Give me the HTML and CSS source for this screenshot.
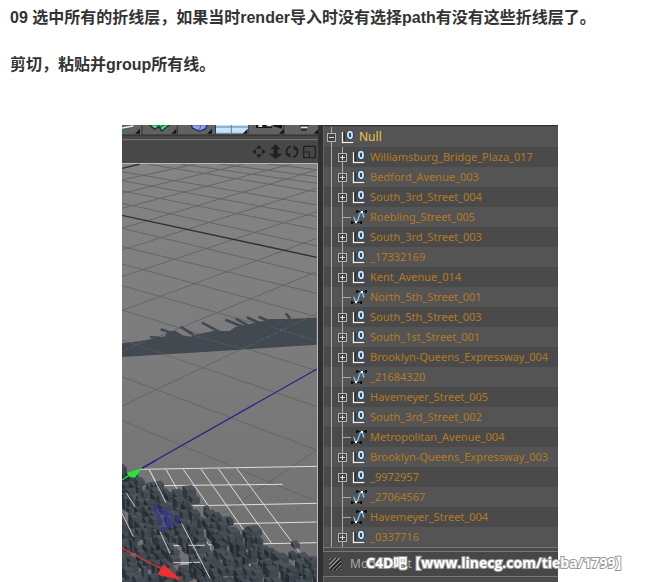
FILE: index.html
```
<!DOCTYPE html>
<html lang="zh-CN">
<head>
<meta charset="utf-8">
<title>C4D</title>
<link rel="stylesheet" href="styles.css">
</head>
<body>
<svg class="defs" aria-hidden="true">
  <symbol id="null" viewBox="0 0 16 16">
    <path d="M3.500 3v11M3 13.500h11" stroke="#2c2c2c" stroke-width="3" fill="none"/>
    <path d="M2.500 3v10.500h11" stroke="#f2f2f2" stroke-width="1.300" fill="none"/>
    <ellipse cx="10" cy="6" rx="2.200" ry="3.200" stroke="#26394c" stroke-width="3.400" fill="none"/>
    <ellipse cx="10" cy="6" rx="2.100" ry="3.300" stroke="#c2e2fc" stroke-width="1.900" fill="none"/>
  </symbol>
  <symbol id="spline" viewBox="0 0 16 16">
    <path d="M6 2.500h9M1 13.500h8" stroke="#111" stroke-width="1"/>
    <path d="M5 1h2v3H5zM14 1h2v3h-2zM0 12h2v3H0zM9 12h2v3H9z" fill="#111"/>
    <path d="M2.500 8c1 0 1.500 5 2.500 5 2.500 0 3-10 5.500-10 1.500 0 1.500 4 2.500 5.500" stroke="#7bbdf0" stroke-width="1.500" fill="none"/>
    <path d="M4 12h2v2H4zM10 2h2v2h-2z" fill="#fff"/>
  </symbol>
</svg>
<main class="article">
  <p>09 选中所有的折线层，如果当时render导入时没有选择path有没有这些折线层了。</p>
  <p>剪切，粘贴并group所有线。</p>
  <figure class="shot">
    <svg class="scene" viewBox="0 0 196 457" role="img" aria-label="3D">
      <defs>
        <linearGradient id="floor" x1="0" y1="0" x2="0" y2="1"><stop offset="0" stop-color="#858585"/><stop offset="1" stop-color="#707070"/></linearGradient>
      </defs>
      <rect width="196" height="457" fill="#484848"/>
      <rect width="196" height="10" fill="#626262"/>
      <g transform="translate(-2 -5) scale(.3333)">
        <path d="M66 15v27M172 15v27M287 15v27M384 15v27M492 15v27" stroke="#333" stroke-width="3"/>
        <path d="M6 24l34-6" stroke="#eee" stroke-width="5"/><path d="M6 30l34-7" stroke="#1d8245" stroke-width="3"/>
        <path d="M88 14l16 14 12-8 10 13 14-12 10-7z" fill="#51d889" stroke="#143d25" stroke-width="4"/><path d="M110 14l12 7 12-7M122 21v12" stroke="#174a2b" stroke-width="3" fill="none"/>
        <path d="M214 14l3 10 22 10 18-8 4-12z" fill="#8fa1ed" stroke="#26305a" stroke-width="4"/><path d="M238 32l5-18" stroke="#4c5b9c" stroke-width="3"/>
        <path d="M288 14h96v28h-96z" fill="#c4e3fc"/><path d="M288 21h96M334 14v28M288 40h96" stroke="#617d95" stroke-width="3"/>
        <path d="M408 14h48v10h-48zM460 14h26v12l-26-7z" fill="#161616"/><path d="M415 14h12v7h-12z" fill="#c4e3fc"/><path d="M440 15h15v4h-15z" fill="#ddd"/>
        <path d="M541 16h25M543 30h18" stroke="#222" stroke-width="5"/><path d="M543 22h20" stroke="#ddd" stroke-width="4"/>
        <path d="M60 26v15H45zM169 26v15h-15zM276 26v15h-15zM383 26v15h-15zM492 26v15h-15zM596 26v15h-15z" fill="#161616"/>
        <path d="M6 45h588" stroke="#2b2b2b" stroke-width="3"/><path d="M6 59h588" stroke="#7a7a7a" stroke-width="3"/>
        <g fill="#202020"><path d="M417 74l8 12h-16zM417 115l8-12h-16zM396 95l12-8v16zM438 95l-12-8v16zM467 72l15 16h-9v13h14l-20 16-20-16h14V88h-9z"/></g>
        <path d="M513 79a16 16 0 0 0-8 28M519 111a16 16 0 0 0 8-28" stroke="#202020" stroke-width="5" fill="none"/><path d="M497 102l15-2-1 14zM535 88l-15 2 1-14z" fill="#202020"/>
        <rect x="551" y="79" width="35" height="34" rx="3" fill="none" stroke="#202020" stroke-width="4"/><path d="M551 96h17v17" fill="none" stroke="#202020" stroke-width="3"/>
      </g>
      <rect y="38" width="196" height="419" fill="url(#floor)"/>
      <g transform="translate(-2 -5) scale(.3333)" stroke="#656565" stroke-width="3" fill="none">
        <path d="M440 132l150 17M300 132l290 38M180 132l410 58M80 132l510 84M6 155l584 100M6 182l584 108M6 213l584 115M6 250l584 128M6 325l584 140M6 380l584 140M6 432l584 158M6 497l584 166M6 570l584 182M6 660l584 200M6 770l584 220M6 902l584 243"/>
        <path d="M6 180l220-48M6 220l364-88M6 265l509-133M6 325l584-175M6 390l584-185M6 470l584-195M6 572l584-217M6 695l584-240M6 858l584-278M310 1180l280-190"/>
        <path d="M6 286l584 126M6 145l54-13" stroke="#303030" stroke-width="4"/>
      </g>
      <g transform="translate(-2 115) scale(.3333)">
        <path d="M6 310l50-6 40-7 40-8 5-14 26-3 20 14 25 4 14-6 54-11h48l20-13 28-4 43-11 32-8h40l99-4v81l-290 19-294 18z" fill="#434950"/>
        <path d="M182 260l40 26M246 248l60 32M316 239l70 28M347 236l45 25M380 232l50 22M416 230l36 16M497 220l14 16M122 268l42 14M90 291l40 4" stroke="#434950" stroke-width="8"/>
        <path d="M6 335l180-83M300 360l290-140M6 300l170 57M215 285l165 45M450 260l140 42" stroke="#7b8085" stroke-width="2" stroke-dasharray="3 5"/>
      </g>
      <path d="M20 343L195 244" stroke="#22228a" stroke-width="1.200"/>
      <g transform="translate(-2 335) scale(.3333)">
        <path d="M60 28l530-9M6 78l482-5M180 138l410-8M300 192l290-6M150 257l440-9M130 312h130M88 30l185 330M138 28l135 240M190 28l200 290M243 27l210 300M296 27l159 223M350 25l195 260M6 100l140 260" stroke="#dedede" stroke-width="3" fill="none"/>
        <g id="city"></g>
        <path d="M88 30l50 98M120 215l30 65M185 190l85 165M6 160l34 70M160 308l80-1M205 256h50M20 100l25 40" stroke="#d0d0d0" stroke-width="3" fill="none"/>
        <path d="M215 306l42 36" stroke="#151515" stroke-width="3"/>
        <path d="M97 136l83 42-55 35M133 155l22 40 25-17z" stroke="#3434a8" stroke-width="4" fill="#30348c" fill-opacity=".5"/>
        <path d="M66 25L110 0" stroke="#22228a" stroke-width="4"/>
        <path d="M6 60L30 44" stroke="#2ae43a" stroke-width="4"/><path d="M20 38l46-13-22 28-14-2z" fill="#2ae43a"/>
        <path d="M6 265l125 65" stroke="#e23434" stroke-width="4"/><path d="M130 313l-18 31 73 17z" fill="#ea3030"/>
      </g>
      <path d="M0 38.500h195.500V457" stroke="#b9b9b9" fill="none"/>
    </svg>
    <section class="objects">
      <ul class="tree">
        <li class="row root"><button class="toggle open" aria-label="Null"></button><svg class="icon"><use href="#null"/></svg><span>Null</span></li>
        <li class="row"><button class="toggle" aria-label="+"></button><svg class="icon"><use href="#null"/></svg><span>Williamsburg_Bridge_Plaza_017</span></li>
        <li class="row"><button class="toggle" aria-label="+"></button><svg class="icon"><use href="#null"/></svg><span>Bedford_Avenue_003</span></li>
        <li class="row"><button class="toggle" aria-label="+"></button><svg class="icon"><use href="#null"/></svg><span>South_3rd_Street_004</span></li>
        <li class="row"><i class="leaf"></i><svg class="icon"><use href="#spline"/></svg><span>Roebling_Street_005</span></li>
        <li class="row"><button class="toggle" aria-label="+"></button><svg class="icon"><use href="#null"/></svg><span>South_3rd_Street_003</span></li>
        <li class="row"><button class="toggle" aria-label="+"></button><svg class="icon"><use href="#null"/></svg><span>_17332169</span></li>
        <li class="row"><button class="toggle" aria-label="+"></button><svg class="icon"><use href="#null"/></svg><span>Kent_Avenue_014</span></li>
        <li class="row"><i class="leaf"></i><svg class="icon"><use href="#spline"/></svg><span>North_5th_Street_001</span></li>
        <li class="row"><button class="toggle" aria-label="+"></button><svg class="icon"><use href="#null"/></svg><span>South_5th_Street_003</span></li>
        <li class="row"><button class="toggle" aria-label="+"></button><svg class="icon"><use href="#null"/></svg><span>South_1st_Street_001</span></li>
        <li class="row"><button class="toggle" aria-label="+"></button><svg class="icon"><use href="#null"/></svg><span>Brooklyn-Queens_Expressway_004</span></li>
        <li class="row"><i class="leaf"></i><svg class="icon"><use href="#spline"/></svg><span>_21684320</span></li>
        <li class="row"><button class="toggle" aria-label="+"></button><svg class="icon"><use href="#null"/></svg><span>Havemeyer_Street_005</span></li>
        <li class="row"><button class="toggle" aria-label="+"></button><svg class="icon"><use href="#null"/></svg><span>South_3rd_Street_002</span></li>
        <li class="row"><i class="leaf"></i><svg class="icon"><use href="#spline"/></svg><span>Metropolitan_Avenue_004</span></li>
        <li class="row"><button class="toggle" aria-label="+"></button><svg class="icon"><use href="#null"/></svg><span>Brooklyn-Queens_Expressway_003</span></li>
        <li class="row"><button class="toggle" aria-label="+"></button><svg class="icon"><use href="#null"/></svg><span>_9972957</span></li>
        <li class="row"><i class="leaf"></i><svg class="icon"><use href="#spline"/></svg><span>_27064567</span></li>
        <li class="row"><i class="leaf"></i><svg class="icon"><use href="#spline"/></svg><span>Havemeyer_Street_004</span></li>
        <li class="row"><button class="toggle" aria-label="+"></button><svg class="icon"><use href="#null"/></svg><span>_0337716</span></li>
      </ul>
      <div class="menubar"><i class="grip"></i><button>Mode</button><button>Edit</button></div>
    </section>
    <figcaption class="watermark">C4D吧【www.linecg.com/tieba/1799】</figcaption>
  </figure>
</main>
<script src="script.js"></script>
</body>
</html>
```
FILE: styles.css
```
body {
  margin: 0;
  background: #fff;
  color: #333;
  font-family: "Liberation Sans", "Noto Sans CJK SC", sans-serif;
  overflow: hidden;
}

.defs {
  position: absolute;
  width: 0;
  height: 0;
}

.article {
  padding: 6px 10px 0;
}

.article p {
  margin: 0 0 23px;
  font-size: 16px;
  font-weight: bold;
  line-height: 24px;
}

.shot {
  position: relative;
  display: grid;
  grid-template-columns: 196px 1fr;
  width: 436px;
  margin: 48px 0 0 112px;
  background: #484848;
}

.scene {
  display: block;
  width: 100%;
}

.objects {
  display: flex;
  flex-direction: column;
  border-left: 5px solid #303030;
  background: #4b4b4b;
  box-shadow: inset 1px 0 #666;
}

.tree {
  margin: 0;
  padding: 1px 0 0 1px;
  list-style: none;
  border-top: 1px solid #333;
  border-bottom: 1px solid #777;
}

.row {
  display: flex;
  align-items: center;
  height: 20px;
  padding-left: 14px;
  color: #b57a20;
  font: 11px/20px "Noto Sans", "Open Sans", sans-serif;
  white-space: nowrap;
  background:
    linear-gradient(#aaa, #aaa) 7px 0 / 1px 100% no-repeat,
    linear-gradient(#aaa, #aaa) 18px 0 / 1px 100% no-repeat,
    #545454;
}

.row:nth-child(even) {
  background-color: #4a4a4a;
}

.row.root {
  padding-left: 3px;
  color: #f3c440;
  font-size: 12px;
  background: linear-gradient(#aaa, #aaa) 7px 0 / 1px 100% no-repeat #545454;
}

.toggle {
  flex: none;
  box-sizing: border-box;
  width: 9px;
  height: 9px;
  margin: 0 4px 0 0;
  padding: 0;
  border: 1px solid #b5b5b5;
  background:
    linear-gradient(#ddd, #ddd) center / 5px 1px no-repeat,
    linear-gradient(#ddd, #ddd) center / 1px 5px no-repeat,
    #444;
}

.toggle.open {
  background: linear-gradient(#ddd, #ddd) center / 5px 1px no-repeat #444;
}

.leaf {
  flex: none;
  width: 9px;
  height: 1px;
  margin-left: 4px;
  background: #aaa;
}

.icon {
  flex: none;
  width: 16px;
  height: 16px;
  margin-right: 3px;
}

.menubar {
  display: flex;
  align-items: center;
  gap: 8px;
  height: 24px;
  margin-top: 3px;
  padding-left: 6px;
  border-top: 1px solid #777;
  border-bottom: 1px solid #777;
  background: #474747;
}

.menubar button {
  padding: 0;
  border: 0;
  background: none;
  color: #aaa;
  font: 12px/20px "Noto Sans", sans-serif;
}

.grip {
  width: 12px;
  height: 12px;
  margin-right: 1px;
  background: repeating-linear-gradient(135deg, #222 0 1px, #888 1px 2px, #444 2px 3px);
}

.watermark {
  position: absolute;
  left: 244px;
  top: 428px;
  color: #fff;
  font: bold 14px/20px "Open Sans", "Noto Sans CJK SC", sans-serif;
  white-space: nowrap;
  -webkit-text-stroke: 2px #999;
  paint-order: stroke fill;
}
```
FILE: script.js
```
// Fills the lower part of the scene with small extruded blocks, back to front.
const outline = [[0, 20], [40, 42], [80, 56], [130, 62], [172, 68], [215, 85], [225, 128], [270, 132],
  [300, 160], [355, 178], [400, 202], [450, 246], [515, 242], [550, 285], [592, 275]];
let seed = 11;
const rnd = () => (seed = (seed * 16807) % 2147483647) / 2147483647;

function edge(x) {
  for (let i = 1; i < outline.length; i++) {
    const [x0, y0] = outline[i - 1];
    const [x1, y1] = outline[i];
    if (x <= x1) return y0 + (y1 - y0) * (x - x0) / (x1 - x0);
  }
  return 280;
}

let shapes = "";
for (let y = 14; y < 390; y += 19) {
  for (let x = -10; x < 568; x += 23) {
    const px = x + rnd() * 18;
    const w = 10 + rnd() * 22;
    const h = 12 + rnd() * 26;
    const top = y + rnd() * 18;
    // Streets run down and to the right at a fixed slope.
    const street = (px - top * 0.52 + 600) % 104 < 12;
    if (top < edge(px) || street || rnd() < 0.06) continue;
    const d = 5 + w * 0.3;
    const tone = Math.round(rnd() * 14);
    const c = (r) => `rgb(${r + tone},${r + 7 + tone},${r + 14 + tone})`;
    shapes += `<path fill="${c(64)}" d="M${px} ${top}l${w} -3l${d} ${d}l${-w} 3z"/>` +
      `<path fill="${c(34)}" d="M${px} ${top}l${d} ${d}v${h}l${-d} ${-d}z"/>` +
      `<path fill="${c(56)}" d="M${px + d} ${top + d}l${w} -3v${h}l${-w} 3z"/>`;
  }
}
document.getElementById("city").innerHTML = shapes;
```
